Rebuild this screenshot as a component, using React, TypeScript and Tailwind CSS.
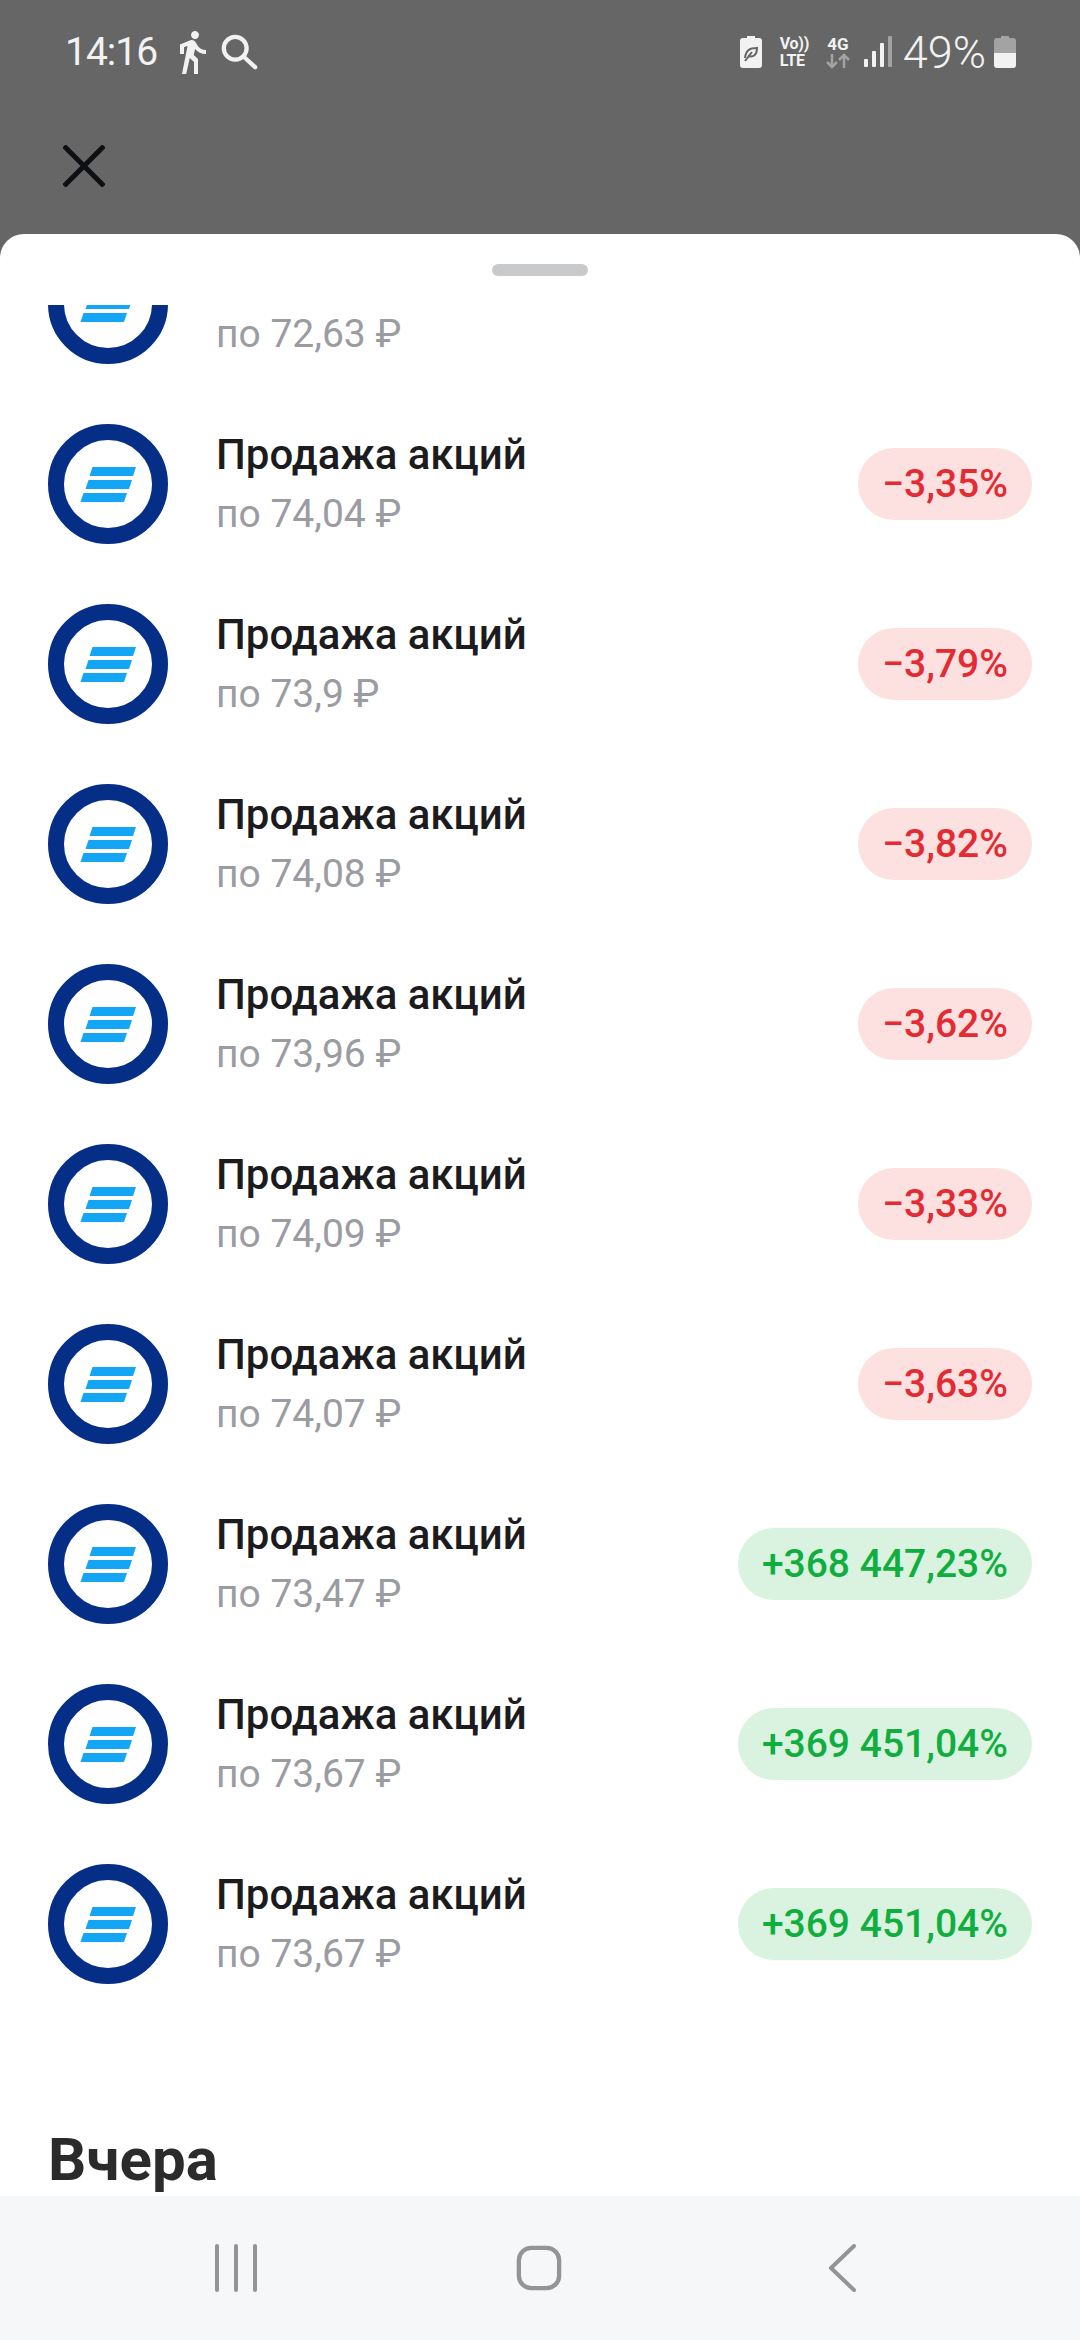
import { MdDirectionsWalk } from 'react-icons/md';

type Sale = { price: string; change: string; hideTitle?: boolean };

const sales: Sale[] = [
  { price: '72,63', change: '', hideTitle: true },
  { price: '74,04', change: '−3,35%' },
  { price: '73,9', change: '−3,79%' },
  { price: '74,08', change: '−3,82%' },
  { price: '73,96', change: '−3,62%' },
  { price: '74,09', change: '−3,33%' },
  { price: '74,07', change: '−3,63%' },
  { price: '73,47', change: '+368 447,23%' },
  { price: '73,67', change: '+369 451,04%' },
  { price: '73,67', change: '+369 451,04%' },
];

function Logo() {
  return (
    <svg viewBox="0 0 120 120" className="w-[120px] h-[120px] shrink-0">
      <circle cx="60" cy="60" r="52" fill="#fff" stroke="#052e87" strokeWidth="16" />
      <path d="M44.5 43H88L85 52H41.5Z M40.5 56H84L81 65H37.5Z M35.5 69H79L76 78H32.5Z" fill="#14a6f5" />
    </svg>
  );
}

function StatusBar() {
  return (
    <div className="h-[104px] pl-[65px] pr-[64px] flex items-center justify-between text-[#f2f2f2]">
      <div className="flex items-center">
        <span className="text-[39px] leading-none tracking-[-1px] font-normal">14:16</span>
        <MdDirectionsWalk className="w-[48px] h-[48px] ml-[11px]" />
        <svg viewBox="0 0 40 40" className="w-[38px] h-[38px] ml-[4px]" fill="none" stroke="currentColor" strokeWidth="4.5" strokeLinecap="round">
          <circle cx="16" cy="16" r="12" />
          <path d="M25 25L37 36" />
        </svg>
      </div>
      <div className="flex items-center">
        <svg viewBox="0 0 22 32" className="w-[22px] h-[32px]">
          <path d="M7 0H15V2H19Q22 2 22 5V29Q22 32 19 32H3Q0 32 0 29V5Q0 2 3 2H7Z" fill="currentColor" />
          <path d="M5 22C6 13 11 12 17 12C17 18 14 22 8 20M5 25L12 16" fill="none" stroke="#666" strokeWidth="2" />
        </svg>
        <div className="ml-[18px] w-[32px] flex flex-col font-bold text-[16px] leading-[17px] tracking-[-0.3px]">
          <span className="whitespace-nowrap">Vo))</span>
          <span>LTE</span>
        </div>
        <div className="ml-[12px] w-[28px] flex flex-col items-center font-bold">
          <span className="text-[17px] leading-[17px]">4G</span>
          <svg viewBox="0 0 26 16" className="w-[26px] h-[16px]" fill="none" stroke="#a3a3a3" strokeWidth="2.5">
            <path d="M7 1V14M2 9L7 14L12 9M19 15V2M14 7L19 2L24 7" />
          </svg>
        </div>
        <svg viewBox="0 0 28 32" className="ml-[12px] w-[28px] h-[32px]">
          <rect x="0" y="23" width="4" height="8" rx="1" fill="currentColor" />
          <rect x="8" y="15" width="4" height="16" rx="1" fill="currentColor" />
          <rect x="16" y="7" width="4" height="24" rx="1" fill="currentColor" />
          <rect x="24" y="0" width="4" height="31" rx="1" fill="#a3a3a3" />
        </svg>
        <span className="ml-[11px] text-[45px] leading-none font-light">49%</span>
        <svg viewBox="0 0 22 32" className="ml-[8px] w-[22px] h-[32px]">
          <path d="M7 0H15V2H19Q22 2 22 5V17H0V5Q0 2 3 2H7Z" fill="#a3a3a3" />
          <path d="M0 17H22V29Q22 32 19 32H3Q0 32 0 29Z" fill="currentColor" />
        </svg>
      </div>
    </div>
  );
}

function SaleRow({ sale }: { sale: Sale }) {
  const up = sale.change.startsWith('+');
  return (
    <div className="h-[180px] flex items-center justify-between">
      <div className="flex items-center gap-[48px]">
        <Logo />
        <div className="flex flex-col">
          {sale.hideTitle ? (
            <div className="h-[58px]" />
          ) : (
            <span className="text-[42px] leading-[58px] font-medium text-[#1c1c1e]">Продажа акций</span>
          )}
          <span className="mt-[1px] text-[39px] leading-[58px] text-[#9a9ca1]">по {sale.price} ₽</span>
        </div>
      </div>
      {sale.change && (
        <span className={up
          ? 'h-[72px] px-[24px] rounded-full flex items-center text-[39px] font-medium bg-[#d9f3e0] text-[#0fae3f]'
          : 'h-[72px] px-[24px] rounded-full flex items-center text-[39px] font-medium bg-[#fde0e0] text-[#e22b32]'}>
          {sale.change}
        </span>
      )}
    </div>
  );
}

export default function App() {
  return (
    <div className="w-[1080px] h-[2340px] flex flex-col bg-[#666666] overflow-hidden font-['Roboto',sans-serif]">
      <StatusBar />

      {/* Close */}
      <div className="h-[130px] pl-[63px] pt-[41px]">
        <svg viewBox="0 0 42 42" className="w-[42px] h-[42px]" fill="none" stroke="#0d0f12" strokeWidth="5">
          <path d="M1 1L41 41M41 1L1 41" />
        </svg>
      </div>

      {/* Sheet */}
      <div className="flex-1 min-h-0 bg-white rounded-t-[24px] flex flex-col">
        <div className="h-[71px] shrink-0 pt-[30px] flex justify-center">
          <div className="w-[96px] h-[12px] rounded-full bg-[#c8cacc]" />
        </div>
        <div className="flex-1 min-h-0 overflow-hidden px-[48px]">
          <div className="-mt-[91px]">
            {sales.map((sale, i) => (
              <SaleRow key={i} sale={sale} />
            ))}
            <h2 className="mt-[116px] text-[60px] leading-none font-bold text-[#2b2b2b]">Вчера</h2>
          </div>
        </div>
      </div>

      {/* Nav bar */}
      <div className="h-[144px] shrink-0 bg-[#f6f7f9] flex items-center pl-[214px]">
        <svg viewBox="0 0 44 48" className="w-[44px] h-[48px]" fill="none" stroke="#949494" strokeWidth="4" strokeLinecap="round">
          <path d="M3 2V46M22 2V46M41 2V46" />
        </svg>
        <svg viewBox="0 0 48 48" className="ml-[258px] w-[46px] h-[48px]" fill="none" stroke="#949494" strokeWidth="4.5">
          <rect x="3" y="3" width="42" height="42" rx="13" />
        </svg>
        <svg viewBox="0 0 28 48" className="ml-[266px] w-[28px] h-[48px]" fill="none" stroke="#949494" strokeWidth="4" strokeLinecap="round" strokeLinejoin="round">
          <path d="M26 2L3 24L26 46" />
        </svg>
      </div>
    </div>
  );
}
